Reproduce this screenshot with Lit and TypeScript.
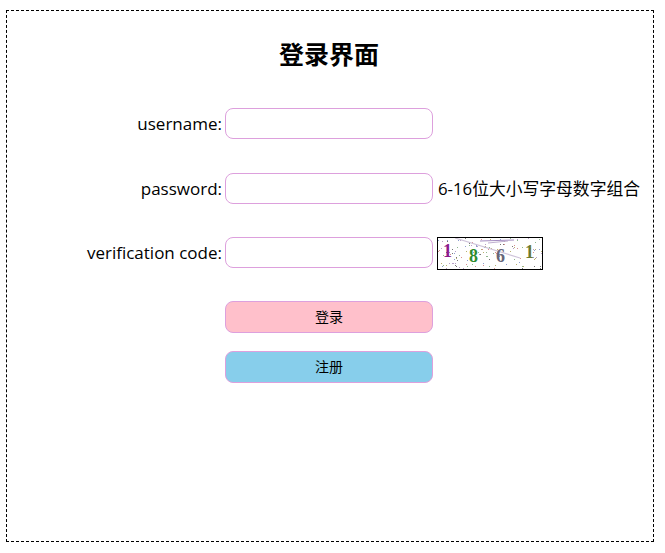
import { LitElement, html, svg, css } from 'lit';
import { customElement } from 'lit/decorators.js';

// pseudo random noise for the captcha picture
const rnd = (n: number) => {
  const v = Math.sin(n * 12.9898) * 43758.5453;
  return v - Math.floor(v);
};
const specks = Array.from({ length: 130 }, (_, i) => ({
  x: Math.floor(rnd(i + 1) * 104),
  y: Math.floor(rnd(i + 500) * 31),
  c: ['#b9a0c8', '#8fb88f', '#d89090', '#8f9fd0', '#b8b070', '#777777'][i % 6],
}));

@customElement('app-root')
export class AppRoot extends LitElement {
  static styles = css`
    :host {
      display: block;
      font-family: 'Open Sans', 'Noto Sans CJK SC', sans-serif;
      color: #000;
    }

    .box {
      box-sizing: border-box;
      width: 648px;
      height: 532px;
      margin: 10px 0 0 6px;
      border: 1px dashed #000;
      padding-top: 27px;
    }

    h1 {
      margin: 0 0 37px;
      padding-right: 2px;
      height: 33px;
      line-height: 33px;
      font-size: 25px;
      font-weight: 700;
      text-align: center;
    }

    form {
      display: grid;
      grid-template-columns: 215px 208px auto;
      column-gap: 3px;
      row-gap: 33.5px;
      align-items: center;
      font-size: 17px;
    }

    label {
      text-align: right;
    }

    input {
      box-sizing: border-box;
      width: 208px;
      height: 31px;
      border: 1px solid #dda0dd;
      border-radius: 8px;
      outline: none;
    }

    .hint {
      margin-left: 2px;
      font-size: 16.8px;
      white-space: nowrap;
    }

    .captcha {
      display: block;
      box-sizing: border-box;
      width: 106px;
      height: 33px;
      margin: 0 0 -2px 1px;
      border: 1px solid #000;
    }

    .captcha text {
      font-family: 'Liberation Serif', serif;
      font-size: 18px;
      font-weight: 700;
    }

    .buttons {
      grid-column: 2;
      display: flex;
      flex-direction: column;
      gap: 18px;
      margin-top: -1px;
    }

    button {
      box-sizing: border-box;
      width: 208px;
      height: 32px;
      padding: 0 0 1px;
      border: 1px solid #dda0dd;
      border-radius: 8px;
      font: inherit;
      font-size: 14px;
      color: #000;
    }

    .login {
      background: #ffc0cb;
    }

    .register {
      background: #87ceeb;
    }
  `;

  render() {
    return html`
      <div class="box">
        <h1>登录界面</h1>
        <form>
          <label>username:</label>
          <input type="text" />
          <span></span>

          <label>password:</label>
          <input type="password" />
          <span class="hint">6-16位大小写字母数字组合</span>

          <label>verification code:</label>
          <input type="text" />
          <svg class="captcha" viewBox="0 0 104 31">
            <rect width="104" height="31" fill="#fff"></rect>
            ${specks.map((s) => svg`<rect x=${s.x} y=${s.y} width="1" height="1" fill=${s.c}></rect>`)}
            <path d="M17 0 L82 20" stroke="#cfc4da" stroke-width="1.2" fill="none"></path>
            <path d="M42 3 L76 2" stroke="#a48cc0" fill="none"></path>
            <path d="M50 5 L70 3" stroke="#c0b0d0" fill="none"></path>
            <text x="5" y="19" fill="#8b1a8b">1</text>
            <text x="31" y="24" fill="#2e8b2e">8</text>
            <text x="58" y="24" fill="#66667a">6</text>
            <text x="87" y="20" fill="#6b7a30">1</text>
          </svg>

          <div class="buttons">
            <button type="button" class="login">登录</button>
            <button type="button" class="register">注册</button>
          </div>
        </form>
      </div>
    `;
  }
}
